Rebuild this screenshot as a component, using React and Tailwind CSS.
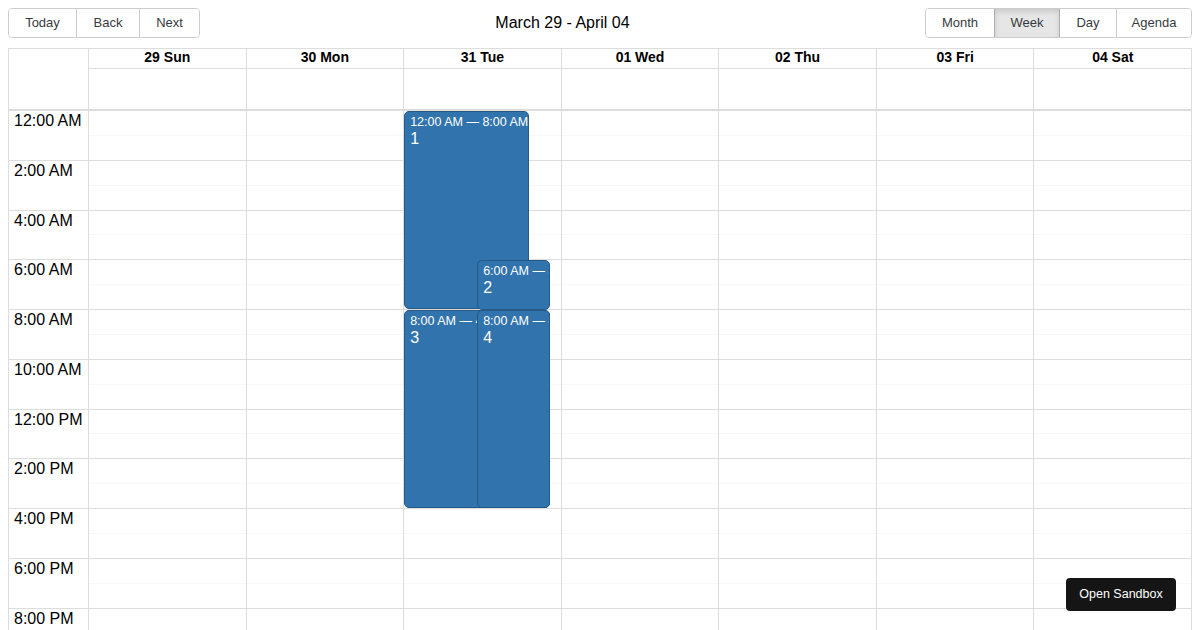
import React from 'react'

const days = ['29 Sun', '30 Mon', '31 Tue', '01 Wed', '02 Thu', '03 Fri', '04 Sat']
const hours = [
  '12:00 AM', '2:00 AM', '4:00 AM', '6:00 AM', '8:00 AM', '10:00 AM',
  '12:00 PM', '2:00 PM', '4:00 PM', '6:00 PM', '8:00 PM', '10:00 PM',
]

const events = [
  { id: 1, label: '12:00 AM — 8:00 AM', top: 0, height: 198, left: 0, width: 125 },
  { id: 2, label: '6:00 AM — 8:00 AM', top: 149, height: 50, left: 73, width: 73 },
  { id: 3, label: '8:00 AM — 4:00 PM', top: 199, height: 198, left: 0, width: 146 },
  { id: 4, label: '8:00 AM — 4:00 PM', top: 199, height: 198, left: 73, width: 73 },
]

function Event({ ev }) {
  return (
    <div
      className="absolute overflow-hidden rounded-[5px] border border-[#265985] bg-[#3174ad] px-[5px] pb-[2px] pt-[3px] text-white"
      style={{ top: ev.top, height: ev.height, left: ev.left, width: ev.width }}
    >
      <div className="whitespace-nowrap text-[12.5px] leading-[15px]">{ev.label}</div>
      <div className="text-base leading-[17px]">{ev.id}</div>
    </div>
  )
}

function ToolbarButton({ children, className, active }) {
  return (
    <button
      type="button"
      className={
        'flex h-[28px] items-center justify-center text-[13px] text-[#373a3c] ' +
        (active ? 'bg-[#e6e6e6] shadow-[inset_0_3px_5px_rgba(0,0,0,0.125)] ' : 'bg-white ') +
        className
      }
    >
      {children}
    </button>
  )
}

export default function App() {
  return (
    <div className="relative h-[630px] overflow-hidden bg-white px-2 pt-2 font-['Liberation_Sans',Arial,sans-serif] text-[#373a3c]">
      {/* toolbar */}
      <div className="mb-[10px] flex items-center">
        <div className="flex overflow-hidden rounded border border-[#ccc]">
          <ToolbarButton className="w-[67px]">Today</ToolbarButton>
          <ToolbarButton className="w-[63px] border-l border-[#ccc]">Back</ToolbarButton>
          <ToolbarButton className="w-[60px] border-l border-[#ccc]">Next</ToolbarButton>
        </div>
        <div className="flex-1 text-center text-base text-black">March 29 - April 04</div>
        <div className="flex overflow-hidden rounded border border-[#ccc]">
          <ToolbarButton className="w-[68px]">Month</ToolbarButton>
          <ToolbarButton active className="w-[66px] border-x border-[#adadad]">Week</ToolbarButton>
          <ToolbarButton className="w-[56px]">Day</ToolbarButton>
          <ToolbarButton className="w-[75px] border-l border-[#ccc]">Agenda</ToolbarButton>
        </div>
      </div>

      {/* calendar */}
      <div className="border border-b-0 border-[#ddd] text-black">
        <div className="flex">
          <div className="w-[79px] shrink-0" />
          {days.map((d) => (
            <div key={d} className="min-w-0 flex-1 border-l border-[#ddd]">
              <div className="h-[20px] border-b border-[#ddd] text-center text-sm font-bold leading-[16px]">{d}</div>
              <div className="h-[40px]" />
            </div>
          ))}
        </div>

        <div className="flex border-t-2 border-[#ddd]">
          <div className="w-[79px] shrink-0">
            {hours.map((h) => (
              <div key={h} className="h-[49.75px] border-b border-[#ddd] px-[5px] pt-px text-base leading-[18px]">
                {h}
              </div>
            ))}
          </div>
          {days.map((d, i) => (
            <div key={d} className="relative min-w-0 flex-1 border-l border-[#ddd]">
              {hours.map((h) => (
                <div key={h} className="flex h-[49.75px] flex-col border-b border-[#ddd]">
                  <div className="flex-1" />
                  <div className="flex-1 border-t border-[#f7f7f7]" />
                </div>
              ))}
              {i === 2 && events.map((ev) => <Event key={ev.id} ev={ev} />)}
            </div>
          ))}
        </div>
      </div>

      <button
        type="button"
        className="absolute bottom-[19px] right-[24px] flex h-[33px] w-[110px] items-center justify-center rounded bg-[#151515] text-[12.5px] text-white"
      >
        Open Sandbox
      </button>
    </div>
  )
}
